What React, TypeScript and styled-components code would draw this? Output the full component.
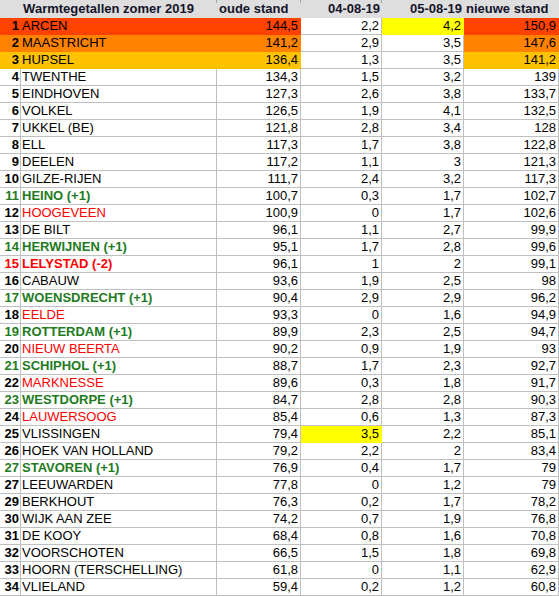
import React from "react";
import styled, { createGlobalStyle, css } from "styled-components";

const GlobalStyle = createGlobalStyle`
  html, body { margin: 0; padding: 0; background: #ffffff; }
  body { font-family: "Liberation Sans", Arial, sans-serif; }
`;

const COLS = "21px 196px 84px 81px 82px 95px";
const GRID = "#c0c0c0";
const GREEN = "#1e7b1e";
const RED = "#ff0000";

type Tone = "normal" | "up" | "down" | "downPlain";

interface RowData {
  rank: number;
  name: string;
  old: string;
  d1: string;
  d2: string;
  now: string;
  fill?: string;
  d1Fill?: string;
  d2Fill?: string;
  tone?: Tone;
}

const rows: RowData[] = [
  { rank: 1, name: "ARCEN", old: "144,5", d1: "2,2", d2: "4,2", now: "150,9", fill: "#ff4200", d2Fill: "#ffff00" },
  { rank: 2, name: "MAASTRICHT", old: "141,2", d1: "2,9", d2: "3,5", now: "147,6", fill: "#ff8200" },
  { rank: 3, name: "HUPSEL", old: "136,4", d1: "1,3", d2: "3,5", now: "141,2", fill: "#ffc200" },
  { rank: 4, name: "TWENTHE", old: "134,3", d1: "1,5", d2: "3,2", now: "139" },
  { rank: 5, name: "EINDHOVEN", old: "127,3", d1: "2,6", d2: "3,8", now: "133,7" },
  { rank: 6, name: "VOLKEL", old: "126,5", d1: "1,9", d2: "4,1", now: "132,5" },
  { rank: 7, name: "UKKEL (BE)", old: "121,8", d1: "2,8", d2: "3,4", now: "128" },
  { rank: 8, name: "ELL", old: "117,3", d1: "1,7", d2: "3,8", now: "122,8" },
  { rank: 9, name: "DEELEN", old: "117,2", d1: "1,1", d2: "3", now: "121,3" },
  { rank: 10, name: "GILZE-RIJEN", old: "111,7", d1: "2,4", d2: "3,2", now: "117,3" },
  { rank: 11, name: "HEINO (+1)", old: "100,7", d1: "0,3", d2: "1,7", now: "102,7", tone: "up" },
  { rank: 12, name: "HOOGEVEEN", old: "100,9", d1: "0", d2: "1,7", now: "102,6", tone: "downPlain" },
  { rank: 13, name: "DE BILT", old: "96,1", d1: "1,1", d2: "2,7", now: "99,9" },
  { rank: 14, name: "HERWIJNEN (+1)", old: "95,1", d1: "1,7", d2: "2,8", now: "99,6", tone: "up" },
  { rank: 15, name: "LELYSTAD (-2)", old: "96,1", d1: "1", d2: "2", now: "99,1", tone: "down" },
  { rank: 16, name: "CABAUW", old: "93,6", d1: "1,9", d2: "2,5", now: "98" },
  { rank: 17, name: "WOENSDRECHT (+1)", old: "90,4", d1: "2,9", d2: "2,9", now: "96,2", tone: "up" },
  { rank: 18, name: "EELDE", old: "93,3", d1: "0", d2: "1,6", now: "94,9", tone: "downPlain" },
  { rank: 19, name: "ROTTERDAM (+1)", old: "89,9", d1: "2,3", d2: "2,5", now: "94,7", tone: "up" },
  { rank: 20, name: "NIEUW BEERTA", old: "90,2", d1: "0,9", d2: "1,9", now: "93", tone: "downPlain" },
  { rank: 21, name: "SCHIPHOL (+1)", old: "88,7", d1: "1,7", d2: "2,3", now: "92,7", tone: "up" },
  { rank: 22, name: "MARKNESSE", old: "89,6", d1: "0,3", d2: "1,8", now: "91,7", tone: "downPlain" },
  { rank: 23, name: "WESTDORPE (+1)", old: "84,7", d1: "2,8", d2: "2,8", now: "90,3", tone: "up" },
  { rank: 24, name: "LAUWERSOOG", old: "85,4", d1: "0,6", d2: "1,3", now: "87,3", tone: "downPlain" },
  { rank: 25, name: "VLISSINGEN", old: "79,4", d1: "3,5", d2: "2,2", now: "85,1", d1Fill: "#ffff00" },
  { rank: 26, name: "HOEK VAN HOLLAND", old: "79,2", d1: "2,2", d2: "2", now: "83,4" },
  { rank: 27, name: "STAVOREN (+1)", old: "76,9", d1: "0,4", d2: "1,7", now: "79", tone: "up" },
  { rank: 27, name: "LEEUWARDEN", old: "77,8", d1: "0", d2: "1,2", now: "79" },
  { rank: 29, name: "BERKHOUT", old: "76,3", d1: "0,2", d2: "1,7", now: "78,2" },
  { rank: 30, name: "WIJK AAN ZEE", old: "74,2", d1: "0,7", d2: "1,9", now: "76,8" },
  { rank: 31, name: "DE KOOY", old: "68,4", d1: "0,8", d2: "1,6", now: "70,8" },
  { rank: 32, name: "VOORSCHOTEN", old: "66,5", d1: "1,5", d2: "1,8", now: "69,8" },
  { rank: 33, name: "HOORN (TERSCHELLING)", old: "61,8", d1: "0", d2: "1,1", now: "62,9" },
  { rank: 34, name: "VLIELAND", old: "59,4", d1: "0,2", d2: "1,2", now: "60,8" },
];

const Sheet = styled.div`
  width: 559px;
  font-size: 13px;
  color: #000;
`;

const HeaderRow = styled.div`
  display: grid;
  grid-template-columns: ${COLS};
  height: 18px;
  background: #dedede;
`;

const HeadCell = styled.div<{ $span?: number; $align: "left" | "right" | "center"; $tick?: boolean }>`
  position: relative;
  grid-column: span ${(p) => p.$span ?? 1};
  height: 17px;
  line-height: 17px;
  font-weight: bold;
  color: #14142a;
  white-space: nowrap;
  text-align: ${(p) => p.$align};
  padding: ${(p) => (p.$align === "right" ? "0 2px 0 0" : p.$align === "left" ? "0 0 0 2px" : "0")};
  ${(p) =>
    p.$tick &&
    css`
      &::after {
        content: "";
        position: absolute;
        right: 0;
        top: 0;
        width: 1px;
        height: 3px;
        background: #a8a8a8;
      }
    `}
`;

const Row = styled.div`
  display: grid;
  grid-template-columns: ${COLS};
  height: 17px;
`;

const Cell = styled.div<{ $fill?: string; $align: "left" | "right"; $color?: string; $bold?: boolean }>`
  box-sizing: border-box;
  height: 17px;
  line-height: 16px;
  white-space: nowrap;
  overflow: hidden;
  background: ${(p) => p.$fill ?? "#ffffff"};
  border-right: 1px solid ${(p) => p.$fill ?? GRID};
  border-bottom: 1px solid ${(p) => p.$fill ?? GRID};
  text-align: ${(p) => p.$align};
  padding: ${(p) => (p.$align === "right" ? "0 2px 0 0" : "0 0 0 1px")};
  color: ${(p) => p.$color ?? "#000"};
  font-weight: ${(p) => (p.$bold ? "bold" : "normal")};
`;

const RankCell = styled(Cell)`
  font-weight: bold;
  padding-right: 1px;
`;

const toneColor = (t?: Tone) =>
  t === "up" ? GREEN : t === "down" || t === "downPlain" ? RED : undefined;

export default function App() {
  return (
    <>
      <GlobalStyle />
      <Sheet>
        <HeaderRow>
          <HeadCell $span={2} $align="center" $tick>
            Warmtegetallen zomer 2019
          </HeadCell>
          <HeadCell $align="left" $tick>
            oude stand
          </HeadCell>
          <HeadCell $align="right" $tick>
            04-08-19
          </HeadCell>
          <HeadCell $align="right">05-08-19</HeadCell>
          <HeadCell $align="left">nieuwe stand</HeadCell>
        </HeaderRow>
        {rows.map((r, i) => {
          const nameColor = toneColor(r.tone);
          const rankColor = r.tone === "up" || r.tone === "down" ? nameColor : undefined;
          const nameBold = r.tone === "up" || r.tone === "down";
          return (
            <Row key={i}>
              <RankCell $align="right" $fill={r.fill} $color={rankColor}>
                {r.rank}
              </RankCell>
              <Cell $align="left" $fill={r.fill} $color={nameColor} $bold={nameBold}>
                {r.name}
              </Cell>
              <Cell $align="right" $fill={r.fill}>
                {r.old}
              </Cell>
              <Cell $align="right" $fill={r.d1Fill}>
                {r.d1}
              </Cell>
              <Cell $align="right" $fill={r.d2Fill}>
                {r.d2}
              </Cell>
              <Cell $align="right" $fill={r.fill}>
                {r.now}
              </Cell>
            </Row>
          );
        })}
      </Sheet>
    </>
  );
}
